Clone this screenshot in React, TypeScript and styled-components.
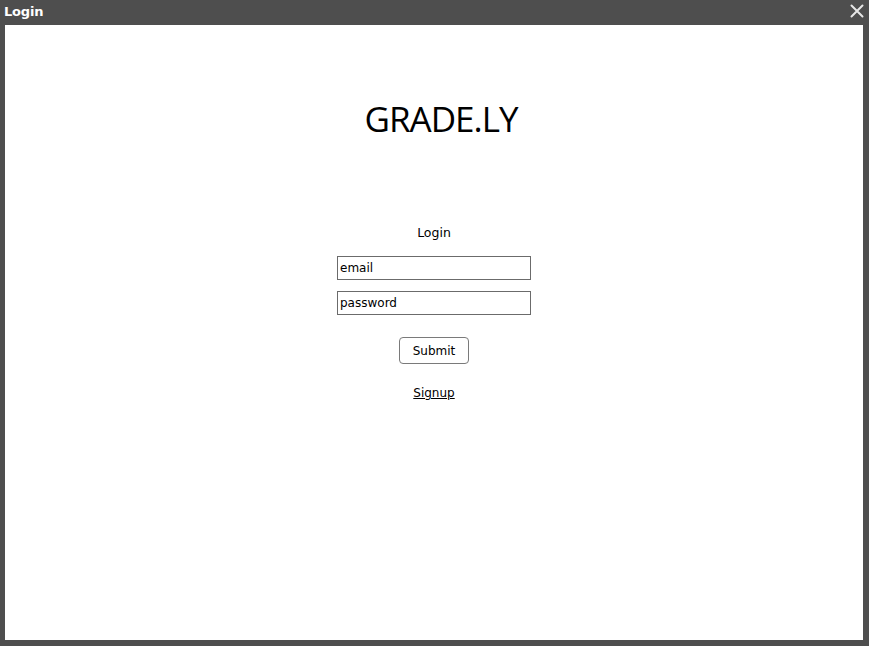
import React from "react";
import styled, { createGlobalStyle } from "styled-components";

const Global = createGlobalStyle`
  html, body { margin: 0; padding: 0; background: #4e4e4e; }
  body { font-family: "DejaVu Sans", "Open Sans", sans-serif; }
  * { box-sizing: border-box; }
`;

const Frame = styled.div`
  width: 869px;
  height: 646px;
  background: #4e4e4e;
  display: flex;
  flex-direction: column;
  padding: 0 6px 6px 5px;
`;

const TitleBar = styled.div`
  height: 25px;
  display: flex;
  align-items: center;
  justify-content: space-between;
  padding-bottom: 3px;
  margin-left: -1px;
  margin-right: -6px;
`;

const Title = styled.span`
  color: #ffffff;
  font-family: "DejaVu Sans", sans-serif;
  font-weight: bold;
  font-size: 13px;
  letter-spacing: -0.2px;
`;

const CloseButton = styled.button`
  background: none;
  border: none;
  padding: 0;
  width: 24px;
  height: 22px;
  display: flex;
  align-items: center;
  justify-content: center;
  cursor: pointer;
`;

const Content = styled.div`
  flex: 1;
  background: #ffffff;
  display: flex;
  flex-direction: column;
  align-items: center;
`;

const Logo = styled.h1`
  margin: 73px 0 0 14px;
  font-family: "Open Sans", "DejaVu Sans", sans-serif;
  font-weight: 400;
  font-size: 35px;
  line-height: 42px;
  letter-spacing: -1px;
  color: #000;
`;

const Form = styled.form`
  margin-top: 85px;
  display: flex;
  flex-direction: column;
  align-items: center;
`;

const FormTitle = styled.div`
  font-size: 12.5px;
  line-height: 16px;
  color: #000;
  margin-bottom: 15px;
`;

const Input = styled.input`
  width: 194px;
  height: 24px;
  border: 1px solid #6b6b6b;
  border-radius: 0;
  padding: 0 2px;
  font-family: "DejaVu Sans", sans-serif;
  font-size: 12px;
  color: #000;
  margin-bottom: 11px;
  outline: none;
  &::placeholder { color: #000; opacity: 1; }
`;

const SubmitButton = styled.button`
  margin-top: 11px;
  width: 70px;
  height: 27px;
  background: #fff;
  border: 1px solid #7a7a7a;
  border-radius: 4px;
  font-family: "DejaVu Sans", sans-serif;
  font-size: 12px;
  color: #000;
  padding: 0;
`;

const SignupLink = styled.a`
  margin-top: 21px;
  font-size: 12px;
  color: #000;
  text-decoration: underline;
  line-height: 16px;
`;

export default function App() {
  return (
    <>
      <Global />
      <Frame>
        <TitleBar>
          <Title>Login</Title>
          <CloseButton aria-label="close">
            <svg width="14" height="14" viewBox="0 0 14 14">
              <path d="M1.5 1.5 L12.5 12.5 M12.5 1.5 L1.5 12.5" stroke="#e6e6e6" strokeWidth="2" strokeLinecap="round" />
            </svg>
          </CloseButton>
        </TitleBar>
        <Content>
          <Logo>GRADE.LY</Logo>
          <Form onSubmit={(e) => e.preventDefault()}>
            <FormTitle>Login</FormTitle>
            <Input type="text" placeholder="email" />
            <Input type="password" placeholder="password" />
            <SubmitButton type="submit">Submit</SubmitButton>
            <SignupLink href="#">Signup</SignupLink>
          </Form>
        </Content>
      </Frame>
    </>
  );
}
